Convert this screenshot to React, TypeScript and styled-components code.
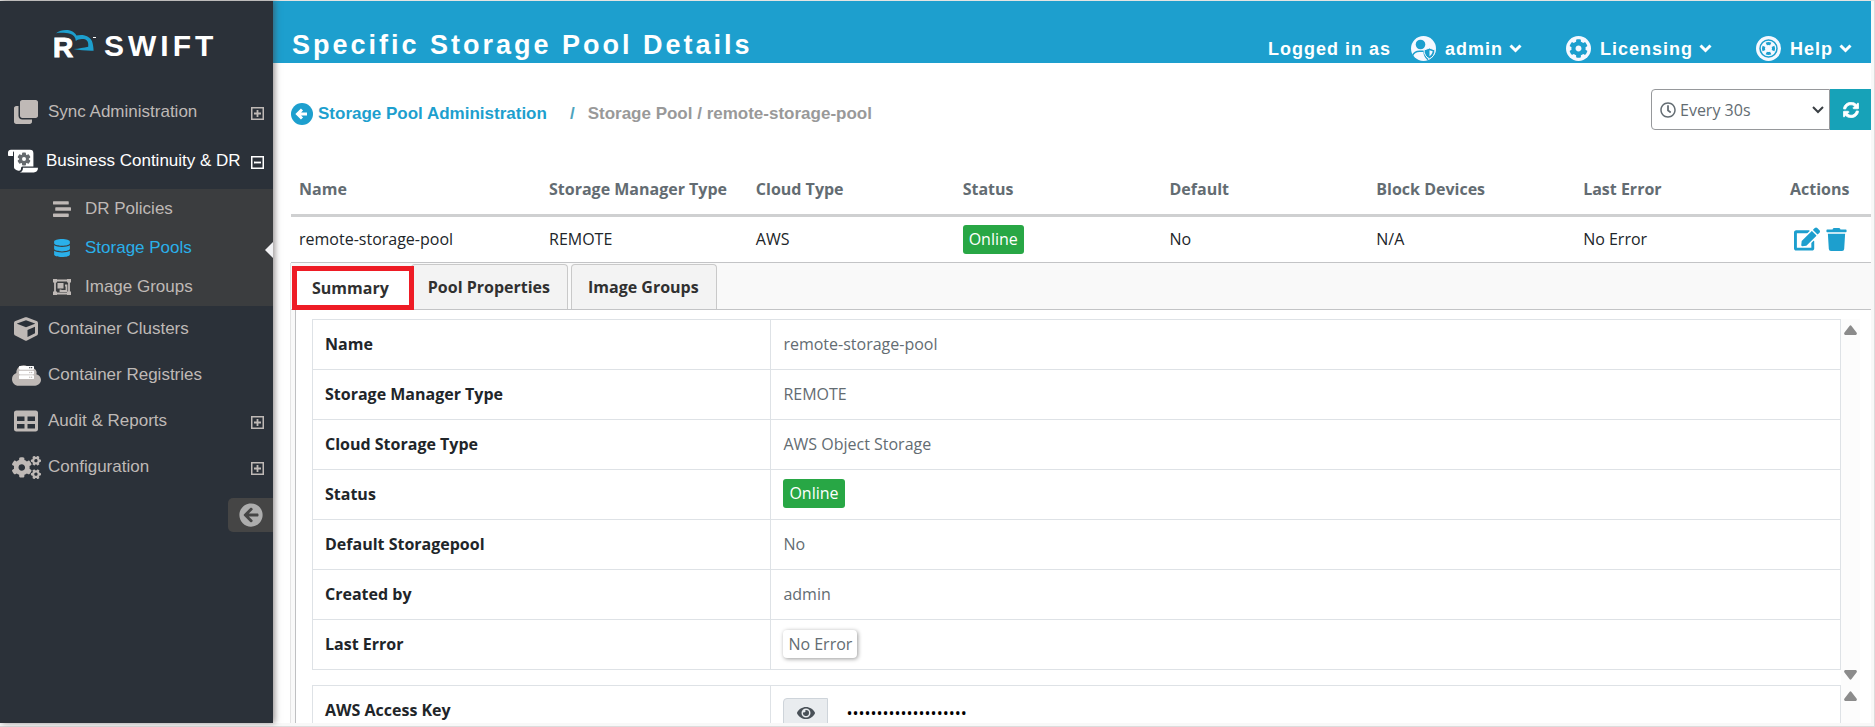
import React, { useId, useState } from "react";
import styled, { createGlobalStyle, css } from "styled-components";
import {
  FaClone,
  FaStream,
  FaDatabase,
  FaCube,
  FaCloud,
  FaServer,
  FaTable,
  FaCogs,
  FaArrowCircleLeft,
  FaRegClock,
  FaSyncAlt,
  FaEdit,
  FaTrash,
  FaEye,
  FaCog,
} from "react-icons/fa";

const color = {
  brand: "#1d9fce",
  sidebar: "#2b3139",
  submenu: "#3b3d3f",
  muted: "#bfb9b6",
  active: "#2ab0ea",
  text: "#212529",
  soft: "#636c72",
  line: "#dee2e6",
  rule: "#c3c4c6",
  ok: "#28a745",
};

const sans = `"Liberation Sans", Arial, sans-serif`;
const body = `"Open Sans", "Noto Sans", sans-serif`;

const GlobalStyle = createGlobalStyle`
  *, *::before, *::after { box-sizing: border-box; }
  body { margin: 0; background: #fff; font: 16px/24px ${body}; color: ${color.text}; overflow: hidden; }
  h1, p, ul { margin: 0; padding: 0; }
  ul { list-style: none; }
  button { font: inherit; color: inherit; border: 0; background: none; padding: 0; cursor: pointer; }
  a { color: inherit; text-decoration: none; }
  svg { display: block; flex: none; }
`;

const Frame = styled.div`
  display: flex;
  height: 100vh;
  padding: 1px 3px 3px 0;
  background: #f8f8f8;
  border-right: 1px solid #dcdcdc;
  border-bottom: 1px solid #dcdcdc;
  box-shadow: inset 0 1px 0 #e4e4e2;
`;

const Sidebar = styled.aside`
  position: relative;
  z-index: 1;
  flex: none;
  width: 273px;
  background: ${color.sidebar};
  color: ${color.muted};
  font: 17px/24px ${sans};
  box-shadow: 2px 0 6px rgba(70, 60, 60, 0.55);
`;

const Brand = styled.a`
  display: flex;
  align-items: flex-end;
  height: 88px;
  padding: 0 0 26px 54px;
  color: #fff;
`;

const BrandMark = styled.svg`
  width: 44px;
  height: 34px;
  font: bold 28px ${sans};
`;

const BrandName = styled.span`
  margin-left: 6px;
  font: bold 30px/34px ${sans};
  letter-spacing: 4px;
`;

const NavItem = styled.a<{ $active?: boolean }>`
  display: flex;
  align-items: center;
  height: 46px;
  padding: 0 9px 0 12px;
  white-space: nowrap;
  ${(p) =>
    p.$active &&
    css`
      color: #fff;
      margin: 3px 0 5px;
      padding-left: 8px;
    `}
`;

const NavIcon = styled.span<{ $wide?: boolean }>`
  position: relative;
  display: flex;
  justify-content: center;
  flex: none;
  width: ${(p) => (p.$wide ? 30 : 28)}px;
  margin-right: 8px;
`;

const Overlay = styled.span`
  position: absolute;
  inset: 4px 0 0 1px;
  display: flex;
  justify-content: center;
  color: #fff;
`;

const NavLabel = styled.span`
  flex: 1;
`;

const Submenu = styled.ul`
  background: ${color.submenu};
`;

const SubLink = styled.a<{ $active?: boolean }>`
  position: relative;
  display: flex;
  align-items: center;
  gap: 14px;
  height: 39px;
  padding-left: 53px;
  color: ${(p) => (p.$active ? color.active : "inherit")};
  ${(p) =>
    p.$active &&
    css`
      &::after {
        content: "";
        position: absolute;
        right: 0;
        top: 14px;
        border: 8px solid transparent;
        border-left: 0;
        border-right-color: #f2f2f4;
      }
    `}
`;

const Collapse = styled.button`
  display: flex;
  align-items: center;
  width: 45px;
  height: 34px;
  margin: 8px 0 0 auto;
  padding-left: 11px;
  border-radius: 5px 0 0 5px;
  background: #454545;
  color: #adadad;
`;

const Main = styled.main`
  flex: 1;
  min-width: 0;
  background: #fff;
  overflow: hidden;
`;

const TopBar = styled.header`
  display: flex;
  justify-content: space-between;
  height: 62px;
  padding: 0 19px 0 19px;
  background: ${color.brand};
  color: #fff;
  font-family: ${sans};
  white-space: nowrap;
`;

const Title = styled.h1`
  padding-top: 28px;
  font: bold 27px/32px ${sans};
  letter-spacing: 3px;
`;

const TopNav = styled.nav`
  display: flex;
  gap: 44px;
  padding-top: 35px;
  font: bold 18px/24px ${sans};
  letter-spacing: 1px;
`;

const Account = styled.div`
  display: flex;
  align-items: center;
  height: 25px;
  gap: 20px;
`;

const TopButton = styled.button`
  display: flex;
  align-items: center;
  height: 25px;
  gap: 6px;
  letter-spacing: inherit;
  & > svg:first-child {
    margin-right: 3px;
  }
`;

const Toolbar = styled.div`
  display: flex;
  justify-content: space-between;
  align-items: flex-start;
  padding: 26px 0 26px 18px;
`;

const Crumbs = styled.nav`
  display: flex;
  align-items: center;
  height: 50px;
  color: #999;
  font: bold 17px/24px ${sans};
`;

const CrumbLink = styled.a`
  display: flex;
  align-items: center;
  gap: 5px;
  color: ${color.brand};
`;

const BackDot = styled.span`
  display: flex;
  align-items: center;
  justify-content: center;
  width: 22px;
  height: 22px;
  border-radius: 50%;
  background: ${color.brand};
`;

const Slash = styled.span`
  margin: 0 13px 0 23px;
  color: #4da3bd;
`;

const Refresh = styled.div`
  display: flex;
  height: 41px;
`;

const IntervalBox = styled.label`
  display: flex;
  align-items: center;
  gap: 4px;
  width: 179px;
  padding: 0 5px 0 8px;
  border: 1px solid #96989b;
  border-radius: 4px 0 0 4px;
  color: ${color.soft};
`;

const Interval = styled.select`
  flex: 1;
  min-width: 0;
  appearance: none;
  border: 0;
  padding: 0;
  background: none;
  font: 16px/24px ${body};
  color: inherit;
`;

const RefreshButton = styled.button`
  display: flex;
  align-items: center;
  justify-content: center;
  width: 41px;
  background: #17a2b8;
  color: #fff;
`;

const PoolTable = styled.table`
  width: calc(100% - 18px);
  margin-left: 18px;
  table-layout: fixed;
  border-collapse: collapse;
  th, td {
    padding: 0 8px;
    text-align: left;
    white-space: nowrap;
  }
  th {
    height: 50px;
    border-bottom: 3px solid #cfd0d1;
    color: ${color.soft};
    font-weight: 700;
  }
  td {
    height: 47px;
    border-bottom: 1px solid ${color.rule};
  }
`;

const NameCol = styled.col`
  width: 250px;
`;

const ActionCol = styled.col`
  width: 89px;
`;

const Badge = styled.span`
  display: inline-block;
  height: 29px;
  padding: 0 6px;
  border-radius: 3px;
  background: ${color.ok};
  color: #fff;
  line-height: 29px;
`;

const Actions = styled.div`
  display: flex;
  align-items: center;
  gap: 5px;
  padding-left: 4px;
  color: ${color.brand};
`;

const Details = styled.section`
  margin-left: 17px;
  padding-left: 4px;
  border-left: 1px solid #e4e4e4;
  background: #f9f9f9;
`;

const TabBar = styled.div`
  display: flex;
  align-items: stretch;
  gap: 3px;
  height: 47px;
  margin-left: -4px;
  padding: 1px 0 0 1px;
  border-bottom: 1px solid ${color.rule};
`;

const Tab = styled.button<{ $selected?: boolean }>`
  position: relative;
  padding: 0 17px 0 16px;
  border: 1px solid #c9c9c9;
  border-bottom: 0;
  border-radius: 4px 4px 0 0;
  background: #f3f3f3;
  color: #303030;
  font-weight: 700;
  ${(p) =>
    p.$selected &&
    css`
      z-index: 1;
      height: 44px;
      margin: 2px -6px 0 0;
      padding: 0 20px 0 15px;
      border: 5px solid #ee1c25;
      border-radius: 0;
      background: #fff;
    `}
`;

const TabPanel = styled.div`
  padding: 9px 11px 0 16px;
  border-left: 1px solid #bfc0c2;
  background: #fff;
`;

const ScrollArea = styled.div`
  display: flex;
  align-items: stretch;
`;

const Properties = styled.table`
  flex: 1;
  align-self: flex-start;
  table-layout: fixed;
  margin-bottom: 15px;
  border-collapse: collapse;
  th, td {
    height: 50px;
    padding: 12px;
    border: 1px solid ${color.line};
    text-align: left;
    vertical-align: top;
  }
  th {
    width: 30%;
    font-weight: 700;
  }
  td {
    color: ${color.soft};
  }
`;

const Flush = styled.div`
  display: flex;
  align-items: center;
  height: 24px;
`;

const ErrorChip = styled.span`
  height: 28px;
  padding: 0 5px;
  border-radius: 4px;
  background: #fff;
  box-shadow: 1px 1px 4px rgba(0, 0, 0, 0.4);
  line-height: 28px;
`;

const Rail = styled.div`
  display: flex;
  flex-direction: column;
  justify-content: space-between;
  align-items: center;
  width: 19px;
  padding: 6px 0 5px;
  background: #fcfcfc;
`;

const SecretGroup = styled.div`
  display: flex;
  height: 30px;
`;

const RevealButton = styled.button`
  display: flex;
  align-items: center;
  justify-content: center;
  width: 45px;
  border: 1px solid #ced4da;
  border-radius: 4px 0 0 0;
  background: #e9ecef;
  color: #495057;
`;

const SecretInput = styled.input`
  flex: 1;
  min-width: 0;
  padding: 0 18px;
  border: 0;
  background: none;
  color: #000;
  font: 16px/24px ${body};
`;

const Chevron = () => (
  <svg width="13" height="9" viewBox="0 0 13 9" fill="none" stroke="currentColor" strokeWidth="3">
    <path d="M1.500 1.500l5 5 5-5" />
  </svg>
);

const ThinChevron = () => (
  <svg width="12" height="8" viewBox="0 0 12 8" fill="none" stroke="#3a3f44" strokeWidth="2">
    <path d="M1 1l5 5 5-5" />
  </svg>
);

const Toggle = ({ open }: { open?: boolean }) => (
  <svg width="13" height="15" viewBox="0 0 13 15" fill="none" stroke="currentColor" strokeWidth="1.500">
    <rect x=".75" y="2.750" width="11.500" height="11.500" />
    <path d={open ? "M3 8.500h7" : "M3 8.500h7M6.500 5v7"} strokeWidth="1.800" />
  </svg>
);

const BackArrow = () => (
  <svg width="14" height="12" viewBox="0 0 14 12" fill="none" stroke="#fff" strokeWidth="3">
    <path d="M7 1.500L2.500 6 7 10.500M3 6h9" />
  </svg>
);

const GroupIcon = () => (
  <svg width="18" height="18" viewBox="0 0 18 18" fill="none" stroke="currentColor" strokeWidth="1.800">
    <path d="M2 2.500h14v13H2z" />
    <path fill="currentColor" stroke="none" d="M0 1h4v3.500H0zM14 1h4v3.500h-4zM0 13.500h4V17H0zM14 13.500h4V17h-4zM4.500 5h6v5.500h-6z" />
    <path d="M12 7.500h1.500v5.500H7.500v-1.500" />
  </svg>
);

const PolicyIcon = () => (
  <svg width="30" height="24" viewBox="0 0 30 24">
    <path fill="#fff" d="M0 3.500A3 3 0 0 1 3 .8h19a3.400 3.400 0 0 1 3.400 3.400v13.400H14.600c-1.300 0-1.600 1-1.600 2.200 0 1.300-.8 2-1.800 2C9.500 21.800 6 20.300 6 18.200V4.200C6 3 5.800 2.500 5.400 2.500S5 2.800 5 4v3H1.200C.4 7 0 6.600 0 6z" />
    <path fill="#fff" d="M15 18.800h15c0 2.800-1.700 4.700-4.300 4.700H11.600c2.200-.4 3.400-2 3.400-4.700z" />
    <g transform="translate(16 10)" fill="#666a6e">
      {[0, 60, 120].map((a) => (
        <rect key={a} x="-2" y="-6.500" width="4" height="13" rx="1" transform={`rotate(${a})`} />
      ))}
      <circle r="4.800" />
      <circle r="2" fill="#fff" />
    </g>
  </svg>
);

const AccountIcon = () => (
  <svg width="25" height="25" viewBox="0 0 25 25">
    <circle cx="12.500" cy="12.500" r="12.500" fill="#f6f8ff" />
    <circle cx="9.500" cy="8.500" r="4.800" fill={color.brand} />
    <path fill="none" stroke={color.brand} strokeWidth="1.500" d="M1.500 19.800c1.300-3.200 3.800-4.600 7-4.600h4.500c.2 3.600 1.600 6.500 4 8.500" />
    <path fill={color.brand} stroke="#f6f8ff" d="M18.500 12l5.500 2c0 4-2 7.200-5.500 8.800-3.500-1.600-5.500-4.800-5.500-8.800z" />
    <path fill="#f6f8ff" d="M18.500 14.200v6c1.800-1.100 2.900-2.700 3.200-4.900z" />
  </svg>
);

const LicenseIcon = () => (
  <svg width="25" height="25" viewBox="0 0 25 25">
    <circle cx="12.500" cy="12.500" r="12.500" fill="#f6f8ff" />
    <svg x="3" y="3" width="19" height="19" color={color.brand}>
      <FaCog size={19} />
    </svg>
  </svg>
);

const HelpIcon = () => (
  <svg width="25" height="25" viewBox="0 0 25 25" fill="none" stroke={color.brand}>
    <circle cx="12.500" cy="12.500" r="12.500" fill="#f6f8ff" stroke="none" />
    <circle cx="12.500" cy="12.500" r="8.500" strokeWidth="1.500" />
    <circle cx="12.500" cy="12.500" r="5" strokeWidth="3" pathLength="80" strokeDasharray="12 8" strokeDashoffset="6" />
  </svg>
);

const Arrow = ({ down }: { down?: boolean }) => (
  <svg width="13" height="10" viewBox="0 0 13 10" fill="#8b8b8b">
    <path d={down ? "M1 0h11q1.500 1 .5 2.500L7.500 9q-1 1.500-2 0L.5 2.500Q-.5 1 1 0z" : "M1 10h11q1.500-1 .5-2.500L7.500 1q-1-1.500-2 0L.5 7.500Q-.5 9 1 10z"} />
  </svg>
);

const subItems = [
  { label: "DR Policies", icon: <FaStream size={18} /> },
  { label: "Storage Pools", icon: <FaDatabase size={18} />, active: true },
  { label: "Image Groups", icon: <GroupIcon /> },
];

const columns = ["Name", "Storage Manager Type", "Cloud Type", "Status", "Default", "Block Devices", "Last Error", "Actions"];

const properties: [string, React.ReactNode][] = [
  ["Name", "remote-storage-pool"],
  ["Storage Manager Type", "REMOTE"],
  ["Cloud Storage Type", "AWS Object Storage"],
  ["Status", <Flush><Badge>Online</Badge></Flush>],
  ["Default Storagepool", "No"],
  ["Created by", "admin"],
  ["Last Error", <Flush><ErrorChip>No Error</ErrorChip></Flush>],
];

const tabs = ["Summary", "Pool Properties", "Image Groups"];

export default function App() {
  const [tab, setTab] = useState(tabs[0]);
  const [shown, setShown] = useState(false);
  const keyId = useId();

  return (
    <>
      <GlobalStyle />
      <Frame>
        <Sidebar>
          <Brand href="#">
            <BrandMark viewBox="0 -1 44 34">
              <text x="-1" y="27" fill="#fff" stroke="#fff">R</text>
              <path fill={color.brand} d="M2 3.200C5 1 8 0 12 0c4.500 0 8 1.500 10.500 5.500 3-.8 7-1 10.500.8 3 1.500 4.500 3.500 5.200 5.500.8 2.500 1.300 5.500 1.400 9-7 .2-14-.5-20-1.700 5.500-.5 10-1.500 14.600-2.400.3-3-.2-4.900-1.400-6.100-1.200-1.200-3-1.600-5-1.500-2.300.1-4.300.7-6 1.900C21.500 7 19.500 5 16 3.800 11.500 2.500 6 2.600 2 3.200z" />
              <path stroke="#fff" d="M39 7.500h3" />
            </BrandMark>
            <BrandName>SWIFT</BrandName>
          </Brand>
          <nav>
            <NavItem href="#">
              <NavIcon><FaClone size={24} /></NavIcon>
              <NavLabel>Sync Administration</NavLabel>
              <Toggle />
            </NavItem>
            <NavItem href="#" $active>
              <NavIcon $wide><PolicyIcon /></NavIcon>
              <NavLabel>Business Continuity &amp; DR</NavLabel>
              <Toggle open />
            </NavItem>
            <Submenu>
              {subItems.map((s) => (
                <li key={s.label}>
                  <SubLink href="#" $active={s.active}>
                    {s.icon}
                    {s.label}
                  </SubLink>
                </li>
              ))}
            </Submenu>
            <NavItem href="#">
              <NavIcon><FaCube size={24} /></NavIcon>
              <NavLabel>Container Clusters</NavLabel>
            </NavItem>
            <NavItem href="#">
              <NavIcon>
                <FaCloud size={29} />
                <Overlay><FaServer size={15} /></Overlay>
              </NavIcon>
              <NavLabel>Container Registries</NavLabel>
            </NavItem>
            <NavItem href="#">
              <NavIcon><FaTable size={24} /></NavIcon>
              <NavLabel>Audit &amp; Reports</NavLabel>
              <Toggle />
            </NavItem>
            <NavItem href="#">
              <NavIcon><FaCogs size={29} /></NavIcon>
              <NavLabel>Configuration</NavLabel>
              <Toggle />
            </NavItem>
          </nav>
          <Collapse aria-label="Collapse menu"><FaArrowCircleLeft size={24} /></Collapse>
        </Sidebar>

        <Main>
          <TopBar>
            <Title>Specific Storage Pool Details</Title>
            <TopNav>
              <Account>
                <span>Logged in as</span>
                <TopButton><AccountIcon />admin<Chevron /></TopButton>
              </Account>
              <TopButton><LicenseIcon />Licensing<Chevron /></TopButton>
              <TopButton><HelpIcon />Help<Chevron /></TopButton>
            </TopNav>
          </TopBar>

          <Toolbar>
            <Crumbs>
              <CrumbLink href="#">
                <BackDot><BackArrow /></BackDot>
                Storage Pool Administration
              </CrumbLink>
              <Slash>/</Slash>
              Storage Pool / remote-storage-pool
            </Crumbs>
            <Refresh>
              <IntervalBox>
                <FaRegClock size={16} />
                <Interval aria-label="Refresh interval">
                  <option>Every 30s</option>
                </Interval>
                <ThinChevron />
              </IntervalBox>
              <RefreshButton aria-label="Refresh"><FaSyncAlt size={16} strokeWidth={24} stroke="currentColor" /></RefreshButton>
            </Refresh>
          </Toolbar>

          <PoolTable>
            <colgroup>
              <NameCol />
              {columns.slice(1, -1).map((c) => <col key={c} />)}
              <ActionCol />
            </colgroup>
            <thead>
              <tr>{columns.map((c) => <th key={c} scope="col">{c}</th>)}</tr>
            </thead>
            <tbody>
              <tr>
                <td>remote-storage-pool</td>
                <td>REMOTE</td>
                <td>AWS</td>
                <td><Badge>Online</Badge></td>
                <td>No</td>
                <td>N/A</td>
                <td>No Error</td>
                <td>
                  <Actions>
                    <button aria-label="Edit"><FaEdit size={26} /></button>
                    <button aria-label="Delete"><FaTrash size={23} /></button>
                  </Actions>
                </td>
              </tr>
            </tbody>
          </PoolTable>

          <Details>
            <TabBar role="tablist">
              {tabs.map((t) => (
                <Tab key={t} role="tab" aria-selected={t === tab} $selected={t === tab} onClick={() => setTab(t)}>
                  {t}
                </Tab>
              ))}
            </TabBar>
            <TabPanel role="tabpanel">
              <ScrollArea>
                <Properties>
                  <tbody>
                    {properties.map(([name, value]) => (
                      <tr key={name}>
                        <th scope="row">{name}</th>
                        <td>{value}</td>
                      </tr>
                    ))}
                  </tbody>
                </Properties>
                <Rail><Arrow /><Arrow down /></Rail>
              </ScrollArea>
              <ScrollArea>
                <Properties>
                  <tbody>
                    <tr>
                      <th scope="row"><label htmlFor={keyId}>AWS Access Key</label></th>
                      <td>
                        <SecretGroup>
                          <RevealButton aria-label="Show key" onClick={() => setShown(!shown)}><FaEye size={18} /></RevealButton>
                          <SecretInput id={keyId} type={shown ? "text" : "password"} readOnly value="00000000000000000000" />
                        </SecretGroup>
                      </td>
                    </tr>
                  </tbody>
                </Properties>
                <Rail><Arrow /><Arrow down /></Rail>
              </ScrollArea>
            </TabPanel>
          </Details>
        </Main>
      </Frame>
    </>
  );
}
